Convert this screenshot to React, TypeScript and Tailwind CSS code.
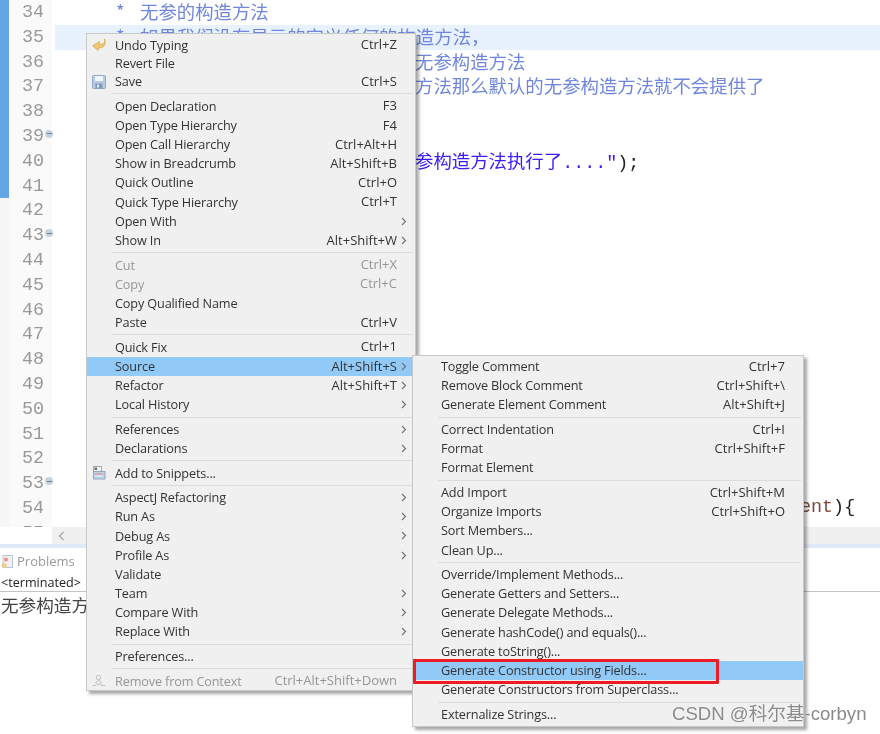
import React from "react"

type Item = {
  label?: string
  keys?: string
  arrow?: boolean
  off?: boolean
  active?: boolean
  tight?: boolean
  icon?: React.ReactNode
  sep?: boolean
}

const UndoIcon = () => (
  <svg width="14" height="14" viewBox="0 0 14 14">
    <path d="M12.5 1 C13.5 5 11.5 6.5 7 6.5 L7.5 3.5 L0.8 7.8 L6 12.5 L6.5 9.8 C11 10.5 14.5 7 12.5 1 Z" fill="#f0c878" stroke="#d9a548" strokeWidth="0.8" />
  </svg>
)

const SaveIcon = () => (
  <svg width="14" height="14" viewBox="0 0 14 14">
    <rect x="0.5" y="0.5" width="13" height="13" rx="1" fill="#b9cbe2" stroke="#93a9c8" />
    <rect x="3" y="1" width="8" height="5" fill="#f2f5fa" />
    <rect x="3.5" y="8.5" width="7" height="5" fill="#7f99bd" />
    <rect x="5" y="9.5" width="2" height="3" fill="#e6ecf4" />
  </svg>
)

const SnippetIcon = () => (
  <svg width="14" height="14" viewBox="0 0 14 14">
    <rect x="1.5" y="0.5" width="8" height="8" fill="#f4f1ea" stroke="#a8a8a0" />
    <rect x="2.5" y="1.5" width="2.5" height="2.5" fill="#5d6f88" />
    <rect x="1.5" y="5.5" width="11.5" height="7.5" fill="#bcd0e6" stroke="#8fa8c6" />
    <path d="M3 8 H11" stroke="#e88a8a" />
    <path d="M3 10 H11" stroke="#f3f6fa" />
  </svg>
)

const ContextIcon = () => (
  <svg width="14" height="14" viewBox="0 0 14 14" fill="none" stroke="#bdbdbd">
    <circle cx="6.5" cy="3.5" r="2.2" />
    <path d="M3.5 9 L6.5 6 L9.5 9 L6.5 11 Z" />
    <path d="M1 11.5 H4 M9 11.5 H13" />
  </svg>
)

const Chevron = () => (
  <svg width="6" height="9" viewBox="0 0 6 9" fill="none" stroke="#6f6f6f" strokeWidth="1.1">
    <path d="M1 1 L4.5 4.5 L1 8" />
  </svg>
)

const mainItems: Item[] = [
  { label: "Undo Typing", keys: "Ctrl+Z", icon: <UndoIcon />, tight: true },
  { label: "Revert File", tight: true },
  { label: "Save", keys: "Ctrl+S", icon: <SaveIcon />, tight: true },
  { sep: true },
  { label: "Open Declaration", keys: "F3" },
  { label: "Open Type Hierarchy", keys: "F4" },
  { label: "Open Call Hierarchy", keys: "Ctrl+Alt+H" },
  { label: "Show in Breadcrumb", keys: "Alt+Shift+B" },
  { label: "Quick Outline", keys: "Ctrl+O" },
  { label: "Quick Type Hierarchy", keys: "Ctrl+T" },
  { label: "Open With", arrow: true },
  { label: "Show In", keys: "Alt+Shift+W", arrow: true },
  { sep: true },
  { label: "Cut", keys: "Ctrl+X", off: true },
  { label: "Copy", keys: "Ctrl+C", off: true },
  { label: "Copy Qualified Name" },
  { label: "Paste", keys: "Ctrl+V" },
  { sep: true },
  { label: "Quick Fix", keys: "Ctrl+1" },
  { label: "Source", keys: "Alt+Shift+S", arrow: true, active: true },
  { label: "Refactor", keys: "Alt+Shift+T", arrow: true },
  { label: "Local History", arrow: true },
  { sep: true },
  { label: "References", arrow: true },
  { label: "Declarations", arrow: true },
  { sep: true },
  { label: "Add to Snippets...", icon: <SnippetIcon /> },
  { sep: true },
  { label: "AspectJ Refactoring", arrow: true },
  { label: "Run As", arrow: true },
  { label: "Debug As", arrow: true },
  { label: "Profile As", arrow: true },
  { label: "Validate" },
  { label: "Team", arrow: true },
  { label: "Compare With", arrow: true },
  { label: "Replace With", arrow: true },
  { sep: true },
  { label: "Preferences..." },
  { sep: true },
  { label: "Remove from Context", keys: "Ctrl+Alt+Shift+Down", off: true, icon: <ContextIcon /> },
]

const sourceItems: Item[] = [
  { label: "Toggle Comment", keys: "Ctrl+7" },
  { label: "Remove Block Comment", keys: "Ctrl+Shift+\\" },
  { label: "Generate Element Comment", keys: "Alt+Shift+J" },
  { sep: true },
  { label: "Correct Indentation", keys: "Ctrl+I" },
  { label: "Format", keys: "Ctrl+Shift+F" },
  { label: "Format Element" },
  { sep: true },
  { label: "Add Import", keys: "Ctrl+Shift+M" },
  { label: "Organize Imports", keys: "Ctrl+Shift+O" },
  { label: "Sort Members..." },
  { label: "Clean Up..." },
  { sep: true },
  { label: "Override/Implement Methods..." },
  { label: "Generate Getters and Setters..." },
  { label: "Generate Delegate Methods..." },
  { label: "Generate hashCode() and equals()..." },
  { label: "Generate toString()..." },
  { label: "Generate Constructor using Fields...", active: true },
  { label: "Generate Constructors from Superclass..." },
  { sep: true },
  { label: "Externalize Strings..." },
]

const MenuRow = ({ item }: { item: Item }) => {
  if (item.sep) {
    return (
      <div className="h-[5.4px] flex items-center pl-[25px] pr-[2px]">
        <div className="h-px w-full bg-[#dcdcdc]" />
      </div>
    )
  }
  return (
    <div
      className={`relative flex items-center pl-[28px] pr-[18px] whitespace-nowrap ${
        item.tight ? "h-[18.4px]" : "h-[19.2px]"
      } ${item.active ? "bg-[#91c9f7]" : ""} ${item.off ? "text-[#969696]" : "text-[#333333]"}`}
    >
      {item.icon && <span className="absolute left-[5px] top-[2px] flex">{item.icon}</span>}
      <span className="flex-1 text-[12.7px] tracking-[-0.15px]">{item.label}</span>
      {item.keys && <span>{item.keys}</span>}
      {item.arrow && (
        <span className="absolute right-[8px] top-[5px] flex">
          <Chevron />
        </span>
      )}
    </div>
  )
}

const lineNumbers = Array.from({ length: 22 }, (_, i) => 34 + i)
const foldLines = [39, 43, 53]

const CodeRow = ({ pad, className, children }: { pad?: string; className?: string; children?: React.ReactNode }) => (
  <div className={`h-[24.8px] leading-[23px] whitespace-nowrap ${pad ?? ""} ${className ?? ""}`}>{children}</div>
)

const Star = () => <span className="inline-block w-[24px]">*</span>

export default function App() {
  return (
    <div className="relative w-[880px] h-[734px] overflow-hidden bg-white font-['Open_Sans','Noto_Sans_CJK_SC',sans-serif] text-[13px] blur-[0.4px]">
      <div className="flex h-[527px] overflow-hidden font-['Liberation_Mono','Noto_Sans_CJK_SC',monospace] text-[18.4px]">
        <div className="w-[9px] shrink-0 bg-[#f6f6f6]">
          <div className="h-[198px] bg-[#62a6e3]" />
        </div>
        <div className="w-[43px] shrink-0 bg-[#fafafa] text-[#999999]">
          {lineNumbers.map((n) => (
            <div key={n} className="relative h-[24.8px] leading-[26px] pl-[13px]">
              {n}
              {foldLines.includes(n) && (
                <span className="absolute left-[36px] top-[6px] w-[8px] h-[8px] rounded-full bg-[#c3d3e0] flex items-center justify-center">
                  <span className="w-[5px] h-px bg-[#6d7f8e]" />
                </span>
              )}
            </div>
          ))}
        </div>
        <div className="flex-1 pl-[3px] text-[#6f86dc] font-['Noto_Sans_CJK_SC','Liberation_Mono',monospace]">
          <CodeRow pad="pl-[61px]"><Star />无参的构造方法</CodeRow>
          <CodeRow pad="pl-[61px]" className="bg-[#e8f2fe]"><Star />如果我们没有显示的定义任何的构造方法，</CodeRow>
          <CodeRow pad="pl-[360px]">无参构造方法</CodeRow>
          <CodeRow pad="pl-[360px]">方法那么默认的无参构造方法就不会提供了</CodeRow>
          <CodeRow />
          <CodeRow />
          <CodeRow pad="pl-[360px]" className="text-[#3a1cf5]">
            参构造方法执行了<span className="font-['Liberation_Mono',monospace]">....&quot;<span className="text-[#222222]">);</span></span>
          </CodeRow>
          <div className="h-[322px]" />
          <CodeRow pad="pl-[745px]" className="text-[#7a4a3a] font-['Liberation_Mono',monospace]">
            ent<span className="text-[#222222]">){"{"}</span>
          </CodeRow>
        </div>
      </div>

      <div className="h-[17px] ml-[52px] bg-[#f0f0f0] flex items-center pl-[6px]">
        <svg width="7" height="10" viewBox="0 0 7 10" fill="none" stroke="#a8a8a8" strokeWidth="1.4">
          <path d="M5.5 1 L1.5 5 L5.5 9" />
        </svg>
      </div>
      <div className="h-[4px] bg-[#dfe8f6]" />

      <div className="flex items-center h-[27px] pt-[1px] pl-px gap-[4px] text-[#9a9a9a]">
        <svg width="12" height="14" viewBox="0 0 12 14">
          <rect x="2" y="0.5" width="9.5" height="12" fill="#f4f0f2" stroke="#b9c4d4" />
          <circle cx="5" cy="4.5" r="2" fill="#ec8f86" />
          <circle cx="3" cy="10.5" r="2.5" fill="#edcf8e" />
        </svg>
        <span>Problems</span>
      </div>
      <div className="h-[16px] leading-[16px] text-[12.6px] text-[#222222] pl-px">&lt;terminated&gt;</div>
      <div className="h-px bg-[#c4c4c4]" />
      <div className="pl-px text-[17.6px] leading-[26px] text-[#444444] font-['Noto_Sans_CJK_SC',sans-serif]">无参构造方</div>

      <div className="absolute left-[86px] top-[33px] w-[330px] h-[658px] py-[2px] bg-[#f0f0f0] border border-[#c8c8c8] shadow-[3px_3px_3px_rgba(0,0,0,0.35)]">
        {mainItems.map((item, i) => (
          <MenuRow key={i} item={item} />
        ))}
      </div>

      <div className="absolute left-[412px] top-[355px] w-[392px] h-[372px] pt-[1px] bg-[#f0f0f0] border border-[#c8c8c8] shadow-[3px_3px_3px_rgba(0,0,0,0.35)]">
        {sourceItems.map((item, i) => (
          <MenuRow key={i} item={item} />
        ))}
      </div>

      <div className="absolute left-[413px] top-[659px] w-[306px] h-[25px] border-[3px] border-[#ed1c24] rounded-[1px]" />

      <div className="absolute left-[672px] top-[702px] text-[18.6px] leading-[24px] text-[#8a8a8a] whitespace-nowrap font-['Liberation_Sans','Noto_Sans_CJK_SC',sans-serif] [text-shadow:0_0_2px_#ffffff]">
        CSDN @科尔基-corbyn
      </div>
    </div>
  )
}
